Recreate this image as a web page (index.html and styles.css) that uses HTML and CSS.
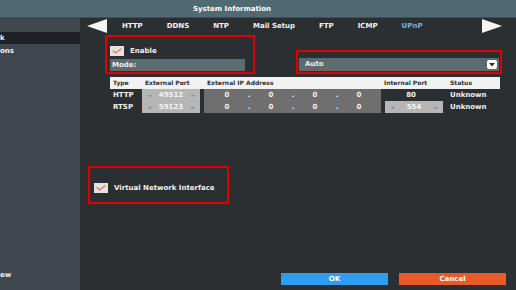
FILE: index.html
```html
<!DOCTYPE html>
<html lang="en">
  <head>
    <meta charset="UTF-8" />
    <title>System Information</title>
    <link rel="stylesheet" href="styles.css">
  </head>
  <body>
    <div class="window">
      <div class="title-bar">System Information</div>
      <div class="body">
        <div class="sidebar">
          <div class="side-item selected">k</div>
          <div class="side-item">ons</div>
          <div class="side-item last">ew</div>
        </div>
        <div class="main">
          <div class="tabs">
            <span class="arrow left"></span>
            <div class="tab-list">
              <span class="tab">HTTP</span>
              <span class="tab">DDNS</span>
              <span class="tab">NTP</span>
              <span class="tab">Mail Setup</span>
              <span class="tab">FTP</span>
              <span class="tab">ICMP</span>
              <span class="tab active">UPnP</span>
            </div>
            <span class="arrow right"></span>
          </div>

          <div class="top-row">
            <div class="red-box enable-box">
              <label class="check-row">
                <span class="checkbox">
                  <svg width="10" height="6" viewBox="0 0 10 6"><path d="M0.8 2.6 L3.6 5 L9.2 0.8" fill="none" stroke="#e8703a" stroke-width="1.3"/></svg>
                </span>
                Enable
              </label>
              <div class="field mode">Mode:</div>
            </div>
            <div class="red-box mode-box">
              <div class="field select">
                Auto
                <span class="drop">
                  <svg width="6" height="4" viewBox="0 0 6 4"><path d="M0 0 H6 L3 3.5 Z" fill="#2b2f32"/></svg>
                </span>
              </div>
            </div>
          </div>

          <div class="port-table">
            <div class="th">Type</div>
            <div class="th">External Port</div>
            <div class="th">External IP Address</div>
            <div class="th">Internal Port</div>
            <div class="th">Status</div>

            <div class="td type">HTTP</div>
            <div class="td"><span class="spin">&#9668;<b>49512</b>&#9658;</span></div>
            <div class="td"><span class="ip"><b>0</b><i>.</i><b>0</b><i>.</i><b>0</b><i>.</i><b>0</b></span></div>
            <div class="td center">80</div>
            <div class="td status">Unknown</div>

            <div class="td type">RTSP</div>
            <div class="td"><span class="spin">&#9668;<b>59123</b>&#9658;</span></div>
            <div class="td"><span class="ip"><b>0</b><i>.</i><b>0</b><i>.</i><b>0</b><i>.</i><b>0</b></span></div>
            <div class="td"><span class="spin small">&#9668;<b>554</b>&#9658;</span></div>
            <div class="td status">Unknown</div>
          </div>

          <div class="red-box vni-box">
            <label class="check-row">
              <span class="checkbox">
                <svg width="10" height="6" viewBox="0 0 10 6"><path d="M0.8 2.6 L3.6 5 L9.2 0.8" fill="none" stroke="#e8703a" stroke-width="1.3"/></svg>
              </span>
              Virtual Network Interface
            </label>
          </div>

          <div class="footer">
            <button class="btn ok">OK</button>
            <button class="btn cancel">Cancel</button>
          </div>
        </div>
      </div>
    </div>
  </body>
</html>
```

FILE: styles.css
```css
/* --------------------
UPnP settings page
-------------------- */
* {
  box-sizing: border-box;
}
body {
  margin: 0;
  font-family: "DejaVu Sans", sans-serif;
  font-weight: bold;
  font-size: 7px;
  color: #f2f2f2;
  background: #2b2f32;
}
.window {
  width: 516px;
  height: 290px;
  display: flex;
  flex-direction: column;
}
.title-bar {
  height: 18px;
  line-height: 18px;
  padding-left: 193px;
  background: #4f6a73;
  color: #ffffff;
  border-bottom: 1px solid #3b4f56;
}
.body {
  flex: 1;
  display: flex;
}
.sidebar {
  width: 80px;
  background: #40474f;
  display: flex;
  flex-direction: column;
  padding-top: 14px;
}
.side-item {
  height: 12px;
  line-height: 12px;
  margin-bottom: 1px;
}
.side-item.selected {
  background: #1d2125;
}
.side-item.last {
  margin-top: auto;
  margin-bottom: 9px;
}
.main {
  flex: 1;
  display: flex;
  flex-direction: column;
  background: #2b2f32;
}

/* tabs */
.tabs {
  height: 16px;
  display: flex;
  align-items: center;
  padding-left: 7px;
}
.arrow {
  width: 0;
  height: 0;
  border-top: 7px solid transparent;
  border-bottom: 7px solid transparent;
}
.arrow.left {
  border-right: 20px solid #f4f4f4;
}
.arrow.right {
  border-left: 20px solid #f4f4f4;
  margin-left: auto;
  margin-right: 14px;
}
.tab-list {
  display: flex;
  gap: 24px;
  margin-left: 15px;
}
.tab {
  color: #f2f2f2;
}
.tab.active {
  color: #6fb3e6;
}

/* red boxes */
.red-box {
  border: 2px solid #e00000;
}
.top-row {
  display: flex;
  align-items: flex-end;
  margin-top: 1px;
}
.enable-box {
  width: 150px;
  height: 39px;
  margin-left: 25px;
  padding: 9px 0 0 3px;
}
.mode-box {
  width: 206px;
  height: 24px;
  margin-left: 41px;
  padding: 6px 0 0 1px;
}
.check-row {
  display: flex;
  align-items: center;
  gap: 6px;
  height: 10px;
}
.checkbox {
  width: 14px;
  height: 10px;
  background: #e3e3e3;
  display: flex;
  align-items: center;
  justify-content: center;
}
.field {
  height: 12px;
  line-height: 12px;
  background: #5b6b71;
  padding-left: 2px;
  color: #eeeeee;
}
.mode {
  width: 135px;
  margin-top: 3px;
}
.select {
  width: 200px;
  height: 13px;
  line-height: 13px;
  padding-left: 6px;
  display: flex;
  align-items: center;
}
.drop {
  margin-left: auto;
  margin-right: 2px;
  width: 10px;
  height: 9px;
  background: #ffffff;
  border-radius: 2px;
  display: flex;
  align-items: center;
  justify-content: center;
}

/* table */
.port-table {
  display: grid;
  grid-template-columns: 32px 62px 177px 66px 53px;
  grid-template-rows: 12px 12px 12px;
  width: 390px;
  margin: 3px 0 0 30px;
}
.th {
  background: #f2f2f2;
  color: #2b2f32;
  font-size: 6px;
  line-height: 12px;
  padding-left: 3px;
}
.td {
  line-height: 12px;
  display: flex;
}
.td.type {
  padding-left: 3px;
}
.td.center {
  justify-content: center;
  padding-right: 6px;
}
.td.status {
  padding-left: 3px;
}
.spin {
  width: 58px;
  background: #b6b6b6;
  color: #8d8d8d;
  font-size: 5px;
  display: flex;
  justify-content: space-between;
  align-items: center;
  padding: 0 5px;
}
.spin b {
  color: #f4f4f4;
  font-size: 7px;
}
.spin.small {
  margin-left: 4px;
}
.ip {
  width: 177px;
  background: #6f6f6f;
  display: flex;
  align-items: center;
  padding-left: 20px;
}
.ip b {
  width: 6px;
  text-align: center;
}
.ip i {
  font-style: normal;
  width: 38px;
  text-align: center;
}

/* virtual network interface */
.vni-box {
  width: 141px;
  height: 38px;
  margin: 53px 0 0 8px;
  padding: 15px 0 0 4px;
}

/* buttons */
.footer {
  margin-top: auto;
  margin-bottom: 5px;
  display: flex;
  justify-content: flex-end;
  gap: 11px;
  padding-right: 10px;
}
.btn {
  width: 107px;
  height: 12px;
  border: none;
  padding: 0;
  font-family: "DejaVu Sans", sans-serif;
  font-weight: bold;
  font-size: 7px;
  color: #ffffff;
  cursor: pointer;
}
.btn.ok {
  background: #2f9ef2;
}
.btn.cancel {
  background: #e85a27;
}
```
